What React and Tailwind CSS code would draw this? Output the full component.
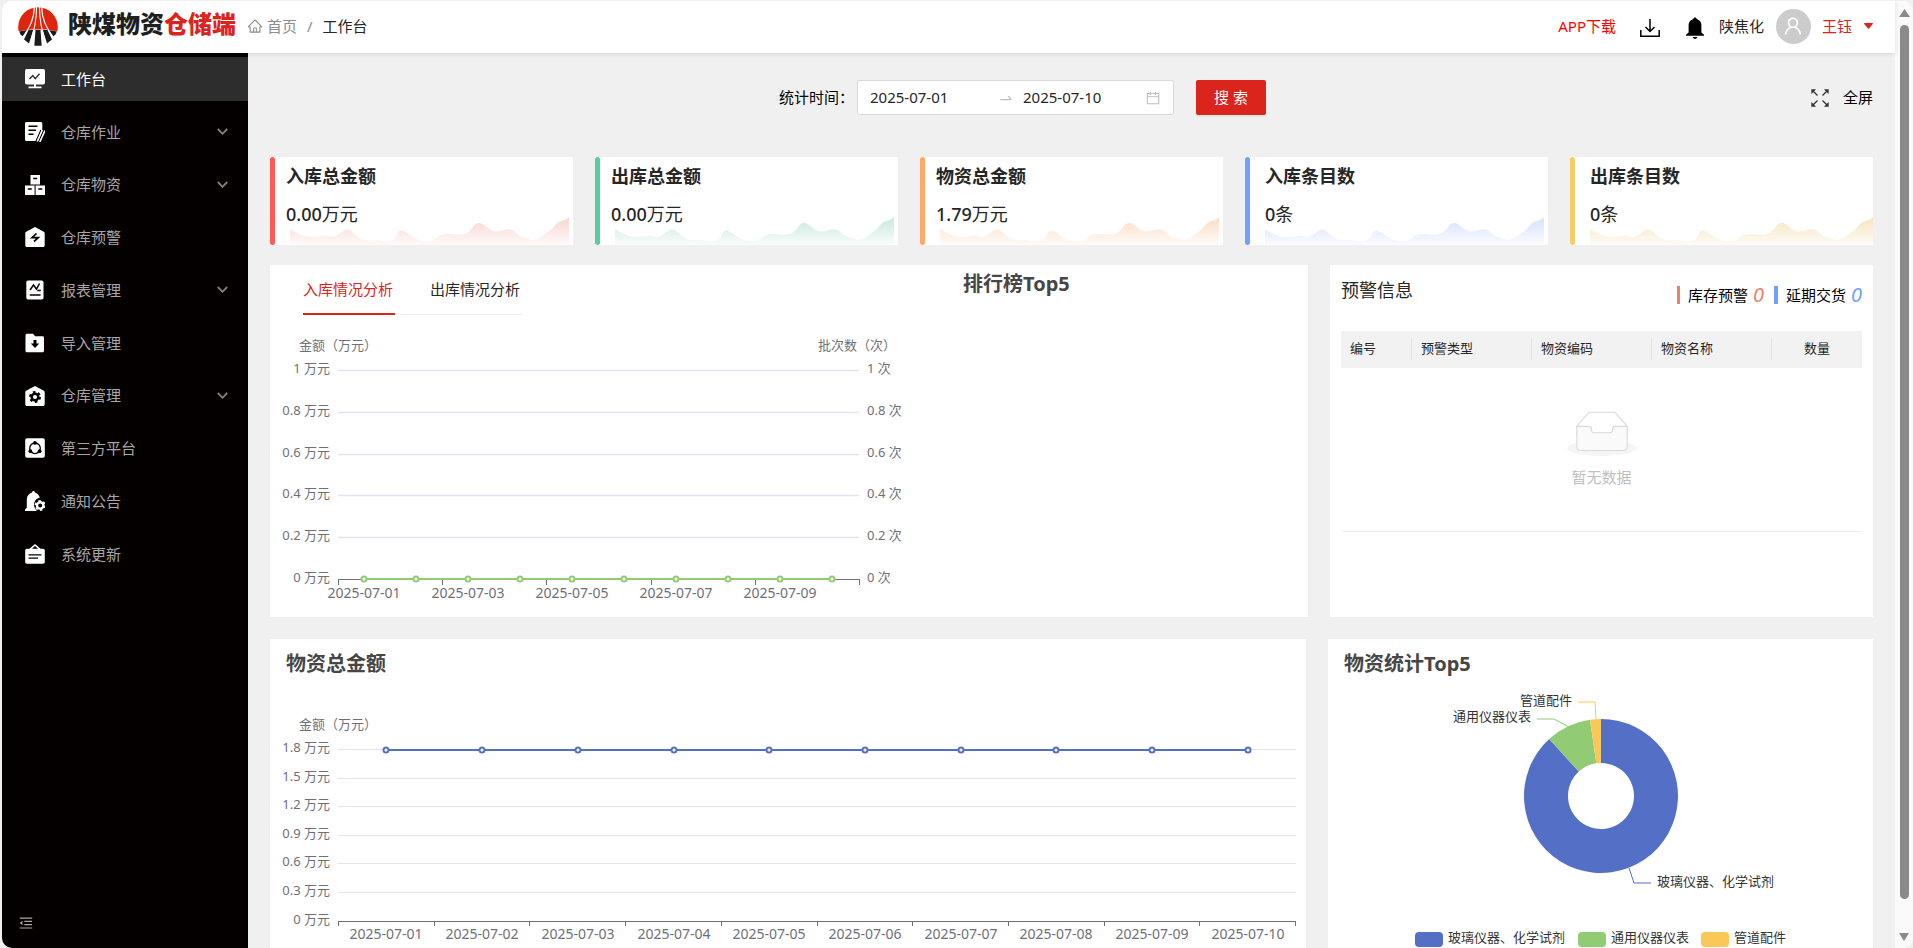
import { useState } from "react";
import {
  AiOutlineCalendar,
  AiOutlineHome,
  AiOutlineMenuFold,
  AiOutlineSwapRight,
  AiOutlineUser,
} from "react-icons/ai";

const DAYS = [
  "2025-07-01",
  "2025-07-02",
  "2025-07-03",
  "2025-07-04",
  "2025-07-05",
  "2025-07-06",
  "2025-07-07",
  "2025-07-08",
  "2025-07-09",
  "2025-07-10",
];

const MENU = [
  { name: "工作台", icon: "board" },
  { name: "仓库作业", icon: "work", children: true },
  { name: "仓库物资", icon: "boxes", children: true },
  { name: "仓库预警", icon: "alarm" },
  { name: "报表管理", icon: "report", children: true },
  { name: "导入管理", icon: "upload" },
  { name: "仓库管理", icon: "house", children: true },
  { name: "第三方平台", icon: "third" },
  { name: "通知公告", icon: "notice" },
  { name: "系统更新", icon: "update" },
];

const STATS = [
  { id: "in", title: "入库总金额", value: "0.00", unit: "万元", bar: "bg-[#ff5a54]", color: "#f8d5d0", pad: "pl-[11px]", wave: "right-1" },
  { id: "out", title: "出库总金额", value: "0.00", unit: "万元", bar: "bg-[#58cda0]", color: "#c9e8dc", pad: "pl-[11px]", wave: "right-1" },
  { id: "total", title: "物资总金额", value: "1.79", unit: "万元", bar: "bg-[#fda969]", color: "#fcdcc3", pad: "pl-[11px]", wave: "right-1" },
  { id: "inCount", title: "入库条目数", value: "0", unit: "条", bar: "bg-[#73a0fa]", color: "#d6e1fc", pad: "pl-[15px]", wave: "right-1" },
  { id: "outCount", title: "出库条目数", value: "0", unit: "条", bar: "bg-[#f3cd67]", color: "#f5e3bd", pad: "pl-[15px]", wave: "right-0" },
];

export default function App() {
  return (
    <div className="h-screen overflow-hidden bg-[#f0f0f0] pl-[2px] pt-px font-['Noto_Sans','Noto_Sans_CJK_SC',sans-serif] text-[15px] text-[#262626]">
      <div className="flex h-full overflow-hidden rounded-[10px] bg-white">
        <div className="flex min-w-0 flex-1 flex-col">
          <Header />
          <div className="flex min-h-0 flex-1">
            <Sidebar />
            <Dashboard />
          </div>
        </div>
        <Scrollbar />
      </div>
    </div>
  );
}

const Header = () => (
  <header className="relative z-10 flex h-[52px] shrink-0 items-center bg-white pb-0.5 shadow-[0_1px_5px_rgba(0,21,41,0.12)]">
    <Logo />
    <h1 className="ml-2.5 -mt-1 w-[165px] whitespace-nowrap text-2xl leading-8 font-black text-[#1f1f1f]">
      陕煤物资<span className="text-[#db241c]">仓储端</span>
    </h1>
    <nav className="ml-[14px] flex items-center text-[#262626]">
      <a href="#" className="flex items-center gap-1 text-[#8c8c8c]">
        <AiOutlineHome size={16} />
        首页
      </a>
      <span className="mx-2.5 text-[#8c8c8c]">/</span>
      <span>工作台</span>
    </nav>
    <div className="ml-auto flex items-center pr-[22px]">
      <a href="#" className="text-[#ff0000]">
        APP下载
      </a>
      <button type="button" aria-label="下载" className="mt-1 ml-6">
        <svg width="20" height="20" viewBox="0 0 20 20" fill="none" stroke="#000" strokeWidth="1.5">
          <path d="M.8 12v6.300h18.400V12" />
          <path d="M10 1v12.500M5.500 9l4.500 4.500L14.500 9" />
        </svg>
      </button>
      <button type="button" aria-label="消息" className="mt-1 ml-[25px]">
        <svg width="20" height="22" viewBox="0 0 20 22" fill="#000">
          <path d="M10 .4c1 0 1.600.6 1.700 1.500 3 .8 4.700 3.200 4.700 6.300v7.200l2.600 2.300v1H1v-1l2.600-2.300V8.200c0-3.100 1.700-5.500 4.700-6.300C8.400 1 9 .4 10 .4z" />
          <path d="M7.600 19.900h4.800c-.2 1-1.200 1.800-2.400 1.800s-2.200-.8-2.400-1.800z" />
        </svg>
      </button>
      <span className="ml-[14px]">陕焦化</span>
      <span className="ml-3 flex size-[35px] items-center justify-center rounded-full bg-[#ccc] text-white">
        <AiOutlineUser size={22} />
      </span>
      <button type="button" className="ml-[11px] flex items-center gap-3 text-[#db241c]">
        王钰
        <svg width="9" height="6" viewBox="0 0 9 6" fill="currentColor">
          <path d="M.6 0h7.800c.5 0 .7.500.4.900L5 5.600a.7.700 0 0 1-1 0L.2.900C-.1.500.1 0 .6 0z" />
        </svg>
      </button>
    </div>
  </header>
);

const Logo = () => (
  <svg className="mt-0.5 ml-4 shrink-0" width="40" height="40" viewBox="0 0 40 40">
    <clipPath id="logo-top">
      <path d="M0 0h40v24.500L28 22.500H12L0 24.500z" />
    </clipPath>
    <circle cx="20" cy="20" r="19.800" fill="#df250d" clipPath="url(#logo-top)" />
    <path d="M1.200 24.500 9.500 23 5 29.500 2.500 27.500zM38.800 24.500 30.500 23l4.500 6.500 2.500-2z" fill="#1b1b1b" />
    <path d="M10.500 23h5L11 36.500l-5-4zM29.500 23h-5L29 36.500l5-4zM17.500 23h5l1.200 15.800h-7.400z" fill="#1b1b1b" />
    <g fill="none" stroke="#fff" strokeWidth="1.100">
      <path d="M16.300 0c-.3 13-4.600 20-11.800 30.500" />
      <path d="M18.500 0c0 15-2.300 22-6.500 36" />
      <path d="M23.700 0c.3 13 4.600 20 11.800 30.500" />
      <path d="M21.500 0c0 15 2.300 22 6.500 36" />
    </g>
  </svg>
);

const Sidebar = () => {
  const [active, setActive] = useState("工作台");

  return (
    <aside className="flex w-[246px] shrink-0 flex-col justify-between bg-[#050000] pt-1 pb-[17px]">
      <nav className="flex h-[519px] flex-col justify-between">
        {MENU.map((item) => (
          <button
            key={item.name}
            type="button"
            onClick={() => setActive(item.name)}
            className={`flex h-11 items-center pr-5 pl-[23px] ${
              active === item.name ? "bg-[#2d2d2d] text-white" : "text-[#a8a6a6]"
            }`}
          >
            <MenuIcon name={item.icon} />
            <span className="ml-4">{item.name}</span>
            {item.children && (
              <svg
                className="ml-auto"
                width="11"
                height="8"
                viewBox="0 0 11 8"
                fill="none"
                stroke="#858282"
                strokeWidth="1.8"
              >
                <path d="M.8 1 5.500 5.800 10.200 1" />
              </svg>
            )}
          </button>
        ))}
      </nav>
      <button type="button" aria-label="收起菜单" className="ml-4 self-start text-[#a8a6a6]">
        <AiOutlineMenuFold size={16} />
      </button>
    </aside>
  );
};

const ICONS = {
  board: (
    <>
      <rect width="20" height="15.500" rx="1.800" />
      <path d="M4.500 10 7.800 6.500l2.500 3.200 4.200-5" className="fill-none stroke-[#2d2d2d] stroke-[1.4]" />
      <path d="M9 15h2v2.500H9zM3.500 17.500h13v1.700h-13z" />
    </>
  ),
  work: (
    <>
      <path d="M1.500 0h14.200c1 0 1.600.7 1.600 1.600V9L12 19H1.500C.7 19 0 18.400 0 17.500v-16C0 .700.700 0 1.500 0z" />
      <path d="M3.500 4.300h9M3.500 8.300h7.500M3.500 12.300h5" className="fill-none stroke-black stroke-[1.4]" />
      <path d="m16 8-5 11.500" className="fill-none stroke-black stroke-[1.4]" />
      <path d="m17.300 8-5 11.500M20 8.500 14.800 20" className="fill-none stroke-white stroke-[1.6]" />
    </>
  ),
  boxes: (
    <>
      <path d="M5.500 0h9.500v9.500H5.500zM0 10.500h9.600V20H0zM10.600 10.500H20V20h-9.400z" />
      <path d="M8.200 3.500h4M2.800 14h4M13.300 14h4" className="fill-none stroke-black stroke-[1.4]" />
    </>
  ),
  alarm: (
    <>
      <path d="M10 0l8.800 4.700c.6.300.9.800.9 1.500v12c0 1-.700 1.800-1.700 1.800H2c-1 0-1.700-.8-1.700-1.800v-12c0-.7.300-1.200.9-1.500z" />
      <path d="M11.500 6.500 7 10.700h6.200L9 14.500" className="fill-none stroke-black stroke-[1.7]" />
    </>
  ),
  report: (
    <>
      <rect x="1.300" y=".5" width="17.200" height="19" rx="1.800" />
      <path d="M5 10 8.500 5l3 4L14.500 3.500M12.300 10.500h3.500M4.800 15h10.800" className="fill-none stroke-black stroke-[1.5]" />
    </>
  ),
  upload: (
    <>
      <path d="M2 .8h6l2.200 2.500H17.500c.9 0 1.500.6 1.500 1.500v13c0 .9-.6 1.500-1.500 1.500h-15C1.200 19.300.5 18.600.5 17.700V2.300C.5 1.400 1.100.8 2 .8z" />
      <path d="M8.500 7h3v3.600h2.700L10 15l-4.200-4.400h2.700z" className="fill-black" />
    </>
  ),
  house: (
    <>
      <path d="M10 0l8.800 4.700c.6.300.9.800.9 1.500v12c0 1-.7 1.800-1.700 1.800H2c-1 0-1.700-.8-1.700-1.800v-12c0-.7.300-1.200.9-1.500z" />
      <circle cx="10" cy="11" r="3.300" className="fill-none stroke-black stroke-[2.4]" />
      <circle cx="10" cy="11" r="5" className="fill-none stroke-black stroke-2" strokeDasharray="2.600 2.600" />
    </>
  ),
  third: (
    <>
      <rect x=".2" y=".2" width="19.600" height="19.600" rx="1.800" />
      <circle cx="10" cy="10.300" r="5.300" className="fill-none stroke-black stroke-[1.3]" />
      <g className="fill-black">
        <circle cx="10" cy="4.900" r="1.900" />
        <circle cx="5.400" cy="13.200" r="1.900" />
        <circle cx="14.600" cy="13.200" r="1.900" />
      </g>
    </>
  ),
  notice: (
    <>
      <path d="M8.500 0c.9 0 1.400.6 1.400 1.500 2.600.8 4.300 2.600 4.900 5.200-3.800.5-6.300 4-5.300 8 .3 1.600 1 2.900 2.100 3.900V20H0v-1.600l1.800-1.700V8.500C1.800 5 3.900 2.400 7.100 1.500 7.100.600 7.600 0 8.500 0z" />
      <circle cx="15.200" cy="14.500" r="5.900" className="fill-black" />
      <circle cx="15.200" cy="14.500" r="3.200" className="fill-none stroke-white stroke-[2.4]" />
      <circle cx="15.200" cy="14.500" r="4.700" className="fill-none stroke-white stroke-[1.6]" strokeDasharray="2.460 2.460" />
    </>
  ),
  update: (
    <>
      <path d="M10 0l5.500 4.800H18c1 0 1.800.7 1.800 1.700v11.500c0 1-.8 1.700-1.800 1.700H2c-1 0-1.800-.7-1.800-1.700V6.500c0-1 .8-1.700 1.800-1.700h2.500zM10 2 7 4.800h6z" fillRule="evenodd" />
      <path d="M3.500 10.800h13M3.500 14.200h9.500" className="fill-none stroke-black stroke-[1.3]" />
    </>
  ),
};

const MenuIcon = ({ name }) => (
  <svg width="20" height="20" viewBox="0 0 20 20" className="fill-white">
    {ICONS[name]}
  </svg>
);

const Dashboard = () => (
  <main className="min-w-0 flex-1 overflow-hidden bg-[#f0f0f0] px-[22px] pt-[27px]">
    <Filter />
    <section className="mt-[42px] grid grid-cols-5 gap-[22px]">
      {STATS.map((stat) => (
        <StatCard key={stat.id} stat={stat} />
      ))}
    </section>
    <div className="mt-5 grid grid-cols-[1038fr_543fr] gap-[22px]">
      <Analysis />
      <Warnings />
    </div>
    <div className="mt-[22px] grid grid-cols-[1036fr_545fr] gap-[22px]">
      <section className="bg-white">
        <AmountChart />
      </section>
      <section className="bg-white">
        <PieChart />
      </section>
    </div>
  </main>
);

const Filter = () => {
  const [start, setStart] = useState("2025-07-01");
  const [end, setEnd] = useState("2025-07-10");

  return (
    <form
      onSubmit={(e) => e.preventDefault()}
      className="grid grid-cols-[509fr_auto_607fr] items-center text-black"
    >
      <div className="col-start-2 flex items-center">
        <label htmlFor="start" className="w-[78px] whitespace-nowrap">
          统计时间：
        </label>
        <div className="flex h-[35px] w-[317px] items-center rounded-xs border border-[#d9d9d9] bg-white px-3 text-[#262626]">
          <input
            id="start"
            value={start}
            onChange={(e) => setStart(e.target.value)}
            className="w-[128px] outline-none"
          />
          <AiOutlineSwapRight size={16} className="shrink-0 text-[#bfbfbf]" />
          <input
            aria-label="结束日期"
            value={end}
            onChange={(e) => setEnd(e.target.value)}
            className="ml-[9px] w-[100px] outline-none"
          />
          <AiOutlineCalendar size={16} className="ml-auto shrink-0 text-[#bfbfbf]" />
        </div>
        <button
          type="submit"
          className="ml-[22px] h-[35px] w-[70px] rounded-xs bg-[#db241c] text-white shadow-[0_2px_0_rgba(0,0,0,0.04)]"
        >
          搜 索
        </button>
      </div>
      <button type="button" className="flex items-center gap-[14px] justify-self-end">
        <svg width="18" height="18" viewBox="0 0 18 18" fill="#333" stroke="#333" strokeWidth="1.300">
          <path d="m1.500 1.500 5 5M16.500 1.500l-5 5M1.500 16.500l5-5M16.500 16.500l-5-5" />
          <path d="M1 1h2.500L1 3.500zM17 1v2.500L14.500 1zM1 17v-2.500L3.500 17zM17 17h-2.500l2.500-2.500z" />
        </svg>
        全屏
      </button>
    </form>
  );
};

const WAVE =
  "M0 12C7 16 13 20 22 20S32 18 37 19 43 21 48 18 55 12 59 12.500 68 22 76 23 82 22 88 23 98 26 104 23 108 13 113 13.500 127 24 136 24 146 24 149 21 155 17 160 17 176 19 181 15 187 6 192 6 202 14 208 14.500 219 11 224 12.500 232 20 238 20.500 243 24 249 22.500 258 17 263 14 269 6 274 4.500 280 3 283 0V28H0Z";

const StatCard = ({ stat }) => (
  <article className="relative flex h-[88px] bg-white">
    <span className={`w-[5px] shrink-0 rounded-full ${stat.bar}`} />
    <div className={`absolute bottom-0 left-5 h-7 ${stat.wave}`}>
      <svg className="size-full" viewBox="0 0 283 28" preserveAspectRatio="none">
        <linearGradient id={stat.id} x1="0" y1="0" x2="0" y2="1">
          <stop offset="0" stopColor={stat.color} />
          <stop offset="1" stopColor={stat.color} stopOpacity="0.1" />
        </linearGradient>
        <path d={WAVE} fill={`url(#${stat.id})`} />
      </svg>
    </div>
    <div className={`relative pt-[5px] ${stat.pad}`}>
      <h2 className="text-lg leading-7 font-bold">{stat.title}</h2>
      <p className="mt-2.5 text-lg leading-7">
        <span className="font-medium">{stat.value}</span>
        {stat.unit}
      </p>
    </div>
  </article>
);

const Analysis = () => {
  const [tab, setTab] = useState("入库情况分析");

  return (
    <section className="grid grid-cols-[671fr_367fr] bg-white">
      <div>
        <div className="ml-[33px] inline-flex gap-[35px] border-b border-[#f0f0f0]" role="tablist">
          {["入库情况分析", "出库情况分析"].map((name) => (
            <button
              key={name}
              type="button"
              role="tab"
              aria-selected={tab === name}
              onClick={() => setTab(name)}
              className={`-mb-px h-[50px] w-[92px] border-b-2 text-left whitespace-nowrap ${
                tab === name ? "border-[#db241c] text-[#db241c]" : "border-transparent"
              }`}
            >
              {name}
            </button>
          ))}
        </div>
        <InboundChart />
      </div>
      <h2 className="pt-[3px] pl-[22px] text-xl leading-8 font-bold text-[#464646]">排行榜Top5</h2>
    </section>
  );
};

const InboundChart = () => {
  const labels = ["1", "0.8", "0.6", "0.4", "0.2", "0"];

  return (
    <svg className="block h-auto w-full" viewBox="0 0 671 302" fontSize="13" fill="#6e7079">
      <text x="29" y="35">金额（万元）</text>
      <text x="548" y="35">批次数（次）</text>
      {labels.map((label, i) => {
        const y = 55.5 + Math.round(i * 41.8);
        return (
          <g key={label}>
            <text x="60" y={y + 2} textAnchor="end">{label} 万元</text>
            <text x="597" y={y + 2}>{label} 次</text>
            <path d={`M68 ${y}H589`} stroke={i === 5 ? "#6e7079" : "#e0e6f1"} strokeWidth={i === 5 ? 1 : 1.5} />
          </g>
        );
      })}
      {[68.5, 172.5, 276.5, 381.5, 485.5, 589.5].map((x) => (
        <path key={x} d={`M${x} 264v6`} stroke="#6e7079" />
      ))}
      <path d="M94 264H562" stroke="#91cc75" strokeWidth="2" />
      {DAYS.map((day, i) => (
        <g key={day}>
          <circle cx={94 + i * 52} cy="264" r="2.500" fill="#fff" stroke="#91cc75" strokeWidth="2" />
          {i % 2 === 0 && (
            <text x={94 + i * 52} y="283" fontSize="14" textAnchor="middle">{day}</text>
          )}
        </g>
      ))}
    </svg>
  );
};

const AmountChart = () => {
  const labels = ["1.8", "1.5", "1.2", "0.9", "0.6", "0.3", "0"];

  return (
    <svg className="block h-auto w-full" viewBox="0 0 1036 332" fontSize="13" fill="#6e7079">
      <text x="16" y="32" fontSize="20" fontWeight="700" fill="#464646">物资总金额</text>
      <text x="29" y="90">金额（万元）</text>
      {labels.map((label, i) => {
        const y = 110.5 + Math.round(i * 28.6);
        return (
          <g key={label}>
            <text x="60" y={y + 2} textAnchor="end">{label} 万元</text>
            <path d={`M68 ${y}H1026`} stroke={i === 6 ? "#6e7079" : "#e0e6f1"} />
          </g>
        );
      })}
      {[...Array(11).keys()].map((i) => (
        <path key={i} d={`M${Math.round(68 + i * 95.7) + 0.5} 282v5`} stroke="#6e7079" />
      ))}
      <path d="M116 111H977" stroke="#5470c6" strokeWidth="2" />
      {DAYS.map((day, i) => {
        const x = Math.round(116.4 + i * 95.7);
        return (
          <g key={day}>
            <circle cx={x} cy="111" r="2.500" fill="#fff" stroke="#5470c6" strokeWidth="2" />
            <text x={x} y="300" fontSize="14" textAnchor="middle">{day}</text>
          </g>
        );
      })}
    </svg>
  );
};

const SLICES = [
  { name: "玻璃仪器、化学试剂", color: "#5470c6", from: 0, to: 317.7, line: "M301 229l5 15h17", x: 329, y: 247, legend: 87 },
  { name: "通用仪器仪表", color: "#91cc75", from: 317.7, to: 351.8, line: "M241 88l-15-8h-17", x: 203, y: 82, anchor: "end", legend: 250 },
  { name: "管道配件", color: "#fac858", from: 351.8, to: 360, line: "M268 80l-1-17h-17", x: 244, y: 66, anchor: "end", legend: 373 },
];

const point = (deg, r) => {
  const a = (deg * Math.PI) / 180;
  return `${(273 + r * Math.sin(a)).toFixed(2)} ${(157 - r * Math.cos(a)).toFixed(2)}`;
};

const ring = ({ from, to }) => {
  const large = to - from > 180 ? 1 : 0;
  return `M${point(from, 77)}A77 77 0 ${large} 1 ${point(to, 77)}L${point(to, 33)}A33 33 0 ${large} 0 ${point(from, 33)}Z`;
};

const PieChart = () => (
  <svg className="block h-auto w-full" viewBox="0 0 545 332" fontSize="13" fill="#333">
    <text x="16" y="32" fontSize="20" fontWeight="700" fill="#464646">物资统计Top5</text>
    {SLICES.map((slice) => (
      <g key={slice.name}>
        <path d={slice.line} fill="none" stroke={slice.color} />
        <path d={ring(slice)} fill={slice.color} />
        <text x={slice.x} y={slice.y} textAnchor={slice.anchor}>{slice.name}</text>
        <rect x={slice.legend} y="293" width="28" height="15" rx="4" fill={slice.color} />
        <text x={slice.legend + 33} y="303">{slice.name}</text>
      </g>
    ))}
  </svg>
);

const Warnings = () => (
  <section className="bg-white px-[11px]">
    <div className="flex items-start justify-between">
      <h2 className="pt-[11px] text-lg leading-7">预警信息</h2>
      <div className="flex items-center pt-4 leading-7 text-black">
        <span className="mr-2 h-[18px] w-[3px] bg-[#ee8168]" />
        库存预警
        <i className="ml-[5px] w-[11px] text-xl leading-7 text-[#ee8168]">0</i>
        <span className="mr-2 ml-2.5 h-[18px] w-1 bg-[#73a0fa]" />
        延期交货
        <i className="ml-[5px] w-[11px] text-xl leading-7 text-[#73a0fa]">0</i>
      </div>
    </div>
    <table className="mt-[22px] w-full table-fixed border-b border-[#f0f0f0]">
      <colgroup>
        <col className="w-[71px]" />
        <col />
        <col />
        <col />
        <col className="w-[90px]" />
      </colgroup>
      <thead className="bg-[#f2f2f2] text-left text-[13px]">
        <tr className="h-[37px]">
          {["编号", "预警类型", "物资编码", "物资名称"].map((name) => (
            <th
              key={name}
              className="relative pb-0.5 pl-[9px] font-normal after:absolute after:top-[7px] after:right-0 after:h-[22px] after:w-px after:bg-[#e2e2e2]"
            >
              {name}
            </th>
          ))}
          <th className="pb-0.5 text-center font-normal">数量</th>
        </tr>
      </thead>
      <tbody>
        <tr>
          <td colSpan="5" className="h-[163px]">
            <div className="flex flex-col items-center gap-2.5 text-[#bfbfbf]">
              <EmptyBox />
              暂无数据
            </div>
          </td>
        </tr>
      </tbody>
    </table>
  </section>
);

const EmptyBox = () => (
  <svg width="70" height="45" viewBox="0 0 64 41">
    <ellipse cx="32" cy="34" rx="32" ry="7" fill="#f5f5f5" />
    <path
      d="M55 13.760 44.854 2.258C44.367 1.474 43.656 1 42.907 1H21.093c-.749 0-1.460.474-1.947 1.257L9 13.761V22h46z"
      fill="#fff"
      stroke="#d9d9d9"
    />
    <path
      d="M41.613 16.931c0-1.605.994-2.930 2.227-2.931H55v18.137C55 34.260 53.680 36 52.050 36h-40.100C10.320 36 9 34.259 9 32.137V14h11.160c1.233 0 2.227 1.323 2.227 2.928v.022c0 1.605 1.005 2.901 2.237 2.901h14.752c1.232 0 2.237-1.308 2.237-2.913z"
      fill="#fafafa"
      stroke="#d9d9d9"
    />
  </svg>
);

const Scrollbar = () => (
  <div className="flex w-[18px] shrink-0 flex-col items-center bg-[#fafafa] pt-2 pb-[7px]">
    <svg width="11" height="8" viewBox="0 0 11 8" fill="#8a8a8a">
      <path d="M5.500 0 11 8H0z" />
    </svg>
    <div className="mt-2 mb-[34px] w-[9px] flex-1 rounded-full bg-[#8a8a8a]" />
    <svg width="10" height="8" viewBox="0 0 10 8" fill="#8a8a8a">
      <path d="M0 0h10L5 8z" />
    </svg>
  </div>
);
